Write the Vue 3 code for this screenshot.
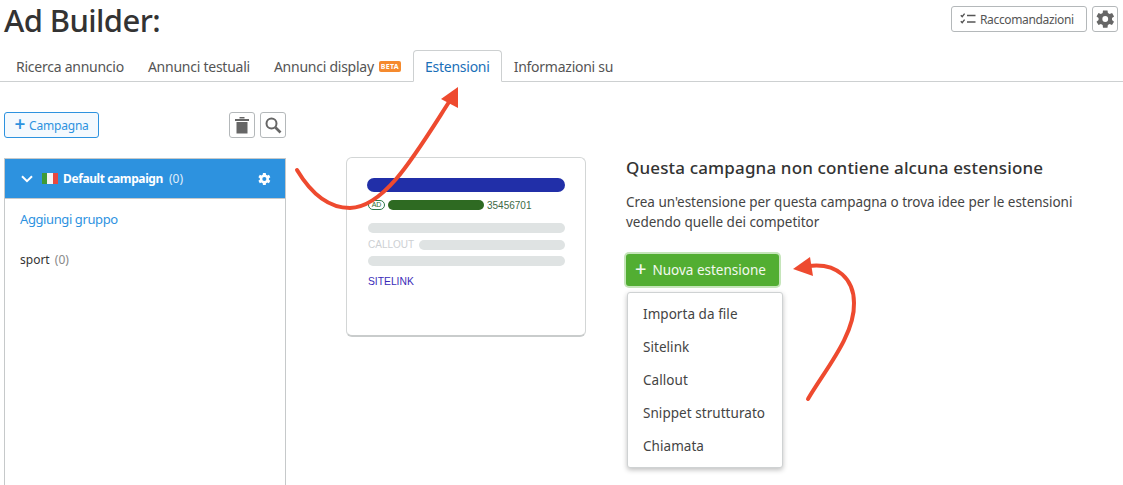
<script setup>
const tabs = [
  { label: 'Ricerca annuncio' },
  { label: 'Annunci testuali' },
  { label: 'Annunci display', beta: true },
  { label: 'Estensioni', active: true },
  { label: 'Informazioni su' },
]

const menuItems = ['Importa da file', 'Sitelink', 'Callout', 'Snippet strutturato', 'Chiamata']
</script>

<template>
  <div class="page">
    <header class="top">
      <h1 class="title">Ad Builder:</h1>
      <div class="top-actions">
        <button type="button" class="btn btn-rec">
          <svg width="16" height="12" viewBox="0 0 16 12" fill="none" stroke="#555" stroke-width="1.4">
            <path d="M0.8 2.2l1.4 1.4 2.4-3" />
            <path d="M0.8 8.2l1.4 1.4 2.4-3" />
            <path d="M7 2.5h8.5M7 9h8.5" stroke-width="1.7" />
          </svg>
          Raccomandazioni
        </button>
        <button type="button" class="btn btn-gear">
          <svg width="20" height="20" viewBox="0 0 24 24" fill="#666">
            <path d="M20.400 13.200a8 8 0 0 0 0-2.400l2.500-1.900-2.400-4.100-2.900 1.200a8 8 0 0 0-2.100-1.200L15 1.800H9.600l-.4 3.100a8 8 0 0 0-2.100 1.200L4.200 4.900 1.800 9l2.500 1.900a8 8 0 0 0 0 2.400l-2.500 1.900 2.400 4.100 2.900-1.200a8 8 0 0 0 2.100 1.200l.4 3.100H15l.4-3.100a8 8 0 0 0 2.100-1.200l2.900 1.200 2.400-4.100zM12.300 15.500a3.500 3.500 0 1 1 0-7 3.500 3.500 0 0 1 0 7z" />
          </svg>
        </button>
      </div>
    </header>

    <nav class="tabs">
      <div
        v-for="tab in tabs"
        :key="tab.label"
        class="tab"
        :class="{ 'tab--active': tab.active }"
      >
        {{ tab.label }}
        <span v-if="tab.beta" class="beta">BETA</span>
      </div>
    </nav>

    <main class="content">
      <aside class="side">
        <div class="side-tools">
          <button type="button" class="btn-camp"><span class="plus">+</span>Campagna</button>
          <div class="side-icons">
            <button type="button" class="btn btn-icon">
              <svg width="16" height="18" viewBox="0 0 16 18" fill="#666">
                <path d="M1 3h14v2H1zM5.500 1h5v1.500h-5zM2.500 6h11v11.500h-11z" />
              </svg>
            </button>
            <button type="button" class="btn btn-icon">
              <svg width="18" height="18" viewBox="0 0 18 18" fill="none" stroke="#666">
                <circle cx="7.500" cy="7.500" r="5" stroke-width="2" />
                <path d="M11.500 11.500l5 5" stroke-width="2.600" />
              </svg>
            </button>
          </div>
        </div>

        <div class="camp-list">
          <div class="camp-head">
            <svg class="chev" width="12" height="8" viewBox="0 0 12 8" fill="none" stroke="#fff" stroke-width="2">
              <path d="M1 1.200l5 5 5-5" />
            </svg>
            <span class="flag"><i class="f-g"></i><i class="f-w"></i><i class="f-r"></i></span>
            <span class="camp-name">Default campaign</span>
            <span class="camp-count">(0)</span>
            <svg class="camp-gear" width="14" height="14" viewBox="0 0 24 24" fill="#fff">
              <path d="M20.400 13.200a8 8 0 0 0 0-2.400l2.500-1.900-2.400-4.100-2.900 1.200a8 8 0 0 0-2.100-1.200L15 1.800h-4.800l-.4 3.100a8 8 0 0 0-2.100 1.200L4.800 4.900 2.400 9l2.500 1.900a8 8 0 0 0 0 2.400l-2.500 1.900 2.400 4.100 2.900-1.200a8 8 0 0 0 2.100 1.200l.4 3.100H15l.4-3.100a8 8 0 0 0 2.100-1.200l2.900 1.200 2.400-4.100zM12.600 15.500a3.500 3.500 0 1 1 0-7 3.500 3.500 0 0 1 0 7z" />
            </svg>
          </div>
          <a class="add-group">Aggiungi gruppo</a>
          <div class="group">sport <span class="group-count">(0)</span></div>
        </div>
      </aside>

      <section class="preview">
        <div class="bar bar-blue"></div>
        <div class="ad-row">
          <span class="ad-badge">AD</span>
          <span class="bar-green"></span>
          <span class="ad-num">35456701</span>
        </div>
        <div class="grey-block">
          <div class="bar"></div>
          <div class="callout-row">
            <span class="callout">CALLOUT</span>
            <div class="bar"></div>
          </div>
          <div class="bar"></div>
          <div class="sitelink">SITELINK</div>
        </div>
      </section>

      <section class="info">
        <h2 class="info-title">Questa campagna non contiene alcuna estensione</h2>
        <p class="info-text">Crea un'estensione per questa campagna o trova idee per le estensioni vedendo quelle dei competitor</p>
        <button type="button" class="btn-new"><span class="plus">+</span>Nuova estensione</button>
        <ul class="menu">
          <li v-for="item in menuItems" :key="item">{{ item }}</li>
        </ul>
      </section>
    </main>

    <!-- red arrows drawn over the screenshot -->
    <svg class="arrows" width="1123" height="485" viewBox="0 0 1123 485" fill="none">
      <g stroke="#ee4a2f" stroke-width="4" stroke-linecap="round">
        <path d="M297 170C312 195 330 208 350 208C385 207 415 155 449 102" />
        <path d="M808 266C838 262 854 280 854 303C855 335 825 370 808 399" />
      </g>
      <g fill="#ee4a2f">
        <path d="M458 87L441 99L458 108Z" />
        <path d="M793 269L810 257L813 276Z" />
      </g>
    </svg>
  </div>
</template>

<style scoped>
.page {
  position: relative;
  width: 1123px;
  height: 485px;
  overflow: hidden;
  background: #fff;
  font-family: 'Noto Sans', 'Open Sans', sans-serif;
  color: #333;
}

.top {
  display: flex;
  justify-content: space-between;
  align-items: flex-start;
  height: 50px;
  padding: 0 5px 0 4px;
  box-sizing: border-box;
}

.title {
  margin: 0;
  font-family: 'Noto Sans', sans-serif;
  font-size: 31px;
  line-height: 40px;
  font-weight: 500;
  letter-spacing: -0.6px;
  color: #333;
}

.top-actions {
  display: flex;
  gap: 5px;
  padding-top: 6px;
}

.btn {
  display: flex;
  align-items: center;
  justify-content: center;
  box-sizing: border-box;
  height: 26px;
  background: #fff;
  border: 1px solid #b4b8ba;
  border-radius: 3px;
  padding: 0;
}

.btn-rec {
  width: 136px;
  gap: 4px;
  justify-content: flex-start;
  padding-left: 8px;
  font-family: inherit;
  font-size: 12px;
  letter-spacing: -0.35px;
  color: #555;
}

.btn-gear {
  width: 26px;
}

.tabs {
  display: flex;
  height: 32px;
  box-sizing: border-box;
  padding-left: 4px;
  border-bottom: 1px solid #cdd0d1;
}

.tab {
  display: flex;
  align-items: center;
  gap: 5px;
  box-sizing: border-box;
  height: 32px;
  padding: 0 11px;
  font-size: 14px;
  letter-spacing: -0.25px;
  color: #555;
  border: 1px solid transparent;
  white-space: nowrap;
}

.tab--active {
  color: #1a6fb8;
  background: #fff;
  border-color: #cdd0d1;
  border-bottom-color: #fff;
  border-radius: 4px 4px 0 0;
}

.beta {
  display: inline-block;
  height: 11px;
  padding: 0 2px;
  font-size: 7px;
  line-height: 11px;
  font-weight: 700;
  letter-spacing: 0.3px;
  color: #fff;
  background: #f58a2e;
  border-radius: 2px;
}

.content {
  display: flex;
}

.side {
  width: 282px;
  margin: 30px 0 0 4px;
  flex: none;
}

.side-tools {
  display: flex;
  justify-content: space-between;
  height: 26px;
  margin-bottom: 20px;
}

.side-icons {
  display: flex;
  gap: 5px;
}

.btn-icon {
  width: 26px;
}

.btn-camp {
  box-sizing: border-box;
  width: 95px;
  height: 26px;
  padding: 0;
  font-family: inherit;
  font-size: 12px;
  letter-spacing: -0.2px;
  color: #2d92df;
  background: #f4f9fe;
  border: 1px solid #2d92df;
  border-radius: 3px;
}

.btn-camp .plus {
  margin-right: 4px;
  font-size: 19px;
  line-height: 12px;
  font-weight: 600;
  vertical-align: -1px;
}

.camp-list {
  box-sizing: border-box;
  height: 340px;
  border: 1px solid #c6c9ca;
}

.camp-head {
  display: flex;
  align-items: center;
  height: 39px;
  padding: 0 14px 0 16px;
  border-bottom: 1px solid #c6c9ca;
  background: #2d92df;
  color: #fff;
  font-size: 12px;
}

.flag {
  display: flex;
  width: 16px;
  height: 11px;
  margin: 0 5px 0 9px;
  flex: none;
}

.flag i {
  flex: 1;
}

.f-g { background: #3d9a37; }
.f-w { background: #f4f4f4; }
.f-r { background: #e8483f; }

.camp-name {
  font-weight: 700;
  letter-spacing: -0.4px;
}

.camp-count {
  margin-left: 6px;
  opacity: 0.85;
}

.camp-gear {
  margin-left: auto;
}

.add-group {
  display: block;
  padding: 10px 15px 0;
  font-size: 13px;
  line-height: 20px;
  letter-spacing: -0.4px;
  color: #2d92df;
}

.group {
  padding: 21px 15px 0;
  font-size: 12px;
  line-height: 20px;
  color: #333;
}

.group-count {
  margin-left: 2px;
  color: #888;
}

.preview {
  box-sizing: border-box;
  width: 240px;
  height: 180px;
  margin: 75px 0 0 60px;
  padding: 20px 20px 0;
  flex: none;
  background: #fff;
  border: 1px solid #d3d6d6;
  border-bottom: 2px solid #c9cccc;
  border-radius: 6px;
}

.bar {
  height: 10px;
  border-radius: 5px;
  background: #dfe3e3;
}

.bar-blue {
  height: 14px;
  border-radius: 7px;
  background: #212fa8;
}

.ad-row {
  display: flex;
  align-items: center;
  height: 10px;
  margin: 8px 0 0 1px;
  font-family: 'Liberation Sans', sans-serif;
}

.ad-badge {
  box-sizing: border-box;
  width: 17px;
  height: 10px;
  font-size: 7px;
  line-height: 8px;
  text-align: center;
  color: #2c6a2a;
  border: 1px solid #2c7a4a;
  border-radius: 5px;
}

.bar-green {
  width: 96px;
  height: 10px;
  margin-left: 3px;
  border-radius: 5px;
  background: #2e6a22;
}

.ad-num {
  margin-left: 3px;
  font-size: 10px;
  color: #3d6a45;
}

.grey-block {
  margin: 13px 0 0 1px;
}

.callout-row {
  display: flex;
  align-items: center;
  gap: 5px;
  margin: 6px 0;
}

.callout-row .bar {
  flex: 1;
}

.callout {
  font-family: 'Liberation Sans', sans-serif;
  font-size: 10px;
  color: #cdd0d3;
}

.sitelink {
  margin-top: 10px;
  font-family: 'Liberation Sans', sans-serif;
  font-size: 10.300px;
  line-height: 12px;
  color: #3a2bb8;
}

.info {
  margin: 75px 0 0 40px;
  width: 460px;
  flex: none;
}

.info-title {
  margin: 0;
  font-size: 17px;
  line-height: 22px;
  font-weight: 500;
  letter-spacing: 0.15px;
  white-space: nowrap;
  color: #333;
}

.info-text {
  margin: 13px 0 0;
  font-size: 13.500px;
  line-height: 20px;
  letter-spacing: -0.03px;
  color: #444;
}

.btn-new {
  display: block;
  box-sizing: border-box;
  width: 153px;
  height: 32px;
  margin-top: 22px;
  padding: 0 0 0 2px;
  text-align: left;
  padding-left: 9px;
  font-family: inherit;
  font-size: 13.500px;
  color: #f2f8ef;
  background: #52ae32;
  border: none;
  border-radius: 3px;
  box-shadow: 0 0 0 2px #c5e5ba;
}

.btn-new .plus {
  margin-right: 6px;
  font-size: 20px;
  line-height: 14px;
  font-weight: 500;
  vertical-align: -1px;
}

.menu {
  box-sizing: border-box;
  width: 156px;
  height: 176px;
  margin: 6px 0 0 1px;
  padding: 5px 0;
  list-style: none;
  background: #fff;
  border: 1px solid #cfd2d3;
  border-radius: 3px;
  box-shadow: 0 2px 5px rgba(0, 0, 0, 0.25);
}

.menu li {
  height: 33px;
  padding-left: 15px;
  font-size: 13.500px;
  line-height: 33px;
  letter-spacing: 0.05px;
  color: #444;
  white-space: nowrap;
}

.arrows {
  position: absolute;
  left: 0;
  top: 0;
  pointer-events: none;
}
</style>
